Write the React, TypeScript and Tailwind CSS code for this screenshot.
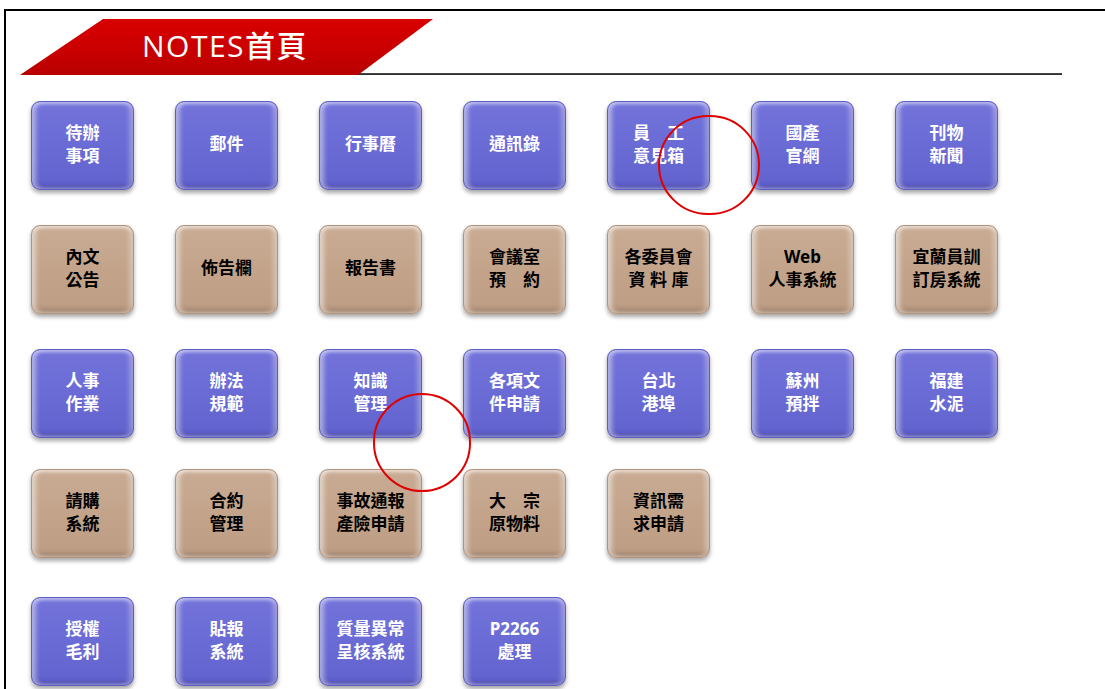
import React from "react";

type Btn = { t: string[]; c: "p" | "t" } | null;

const rows: { mt: string; items: Btn[] }[] = [
  {
    mt: "mt-[26px]",
    items: [
      { t: ["待辦", "事項"], c: "p" },
      { t: ["郵件"], c: "p" },
      { t: ["行事曆"], c: "p" },
      { t: ["通訊錄"], c: "p" },
      { t: ["員　工", "意見箱"], c: "p" },
      { t: ["國產", "官網"], c: "p" },
      { t: ["刊物", "新聞"], c: "p" },
    ],
  },
  {
    mt: "mt-[35px]",
    items: [
      { t: ["內文", "公告"], c: "t" },
      { t: ["佈告欄"], c: "t" },
      { t: ["報告書"], c: "t" },
      { t: ["會議室", "預　約"], c: "t" },
      { t: ["各委員會", "資 料 庫"], c: "t" },
      { t: ["Web", "人事系統"], c: "t" },
      { t: ["宜蘭員訓", "訂房系統"], c: "t" },
    ],
  },
  {
    mt: "mt-[35px]",
    items: [
      { t: ["人事", "作業"], c: "p" },
      { t: ["辦法", "規範"], c: "p" },
      { t: ["知識", "管理"], c: "p" },
      { t: ["各項文", "件申請"], c: "p" },
      { t: ["台北", "港埠"], c: "p" },
      { t: ["蘇州", "預拌"], c: "p" },
      { t: ["福建", "水泥"], c: "p" },
    ],
  },
  {
    mt: "mt-[31px]",
    items: [
      { t: ["請購", "系統"], c: "t" },
      { t: ["合約", "管理"], c: "t" },
      { t: ["事故通報", "產險申請"], c: "t" },
      { t: ["大　宗", "原物料"], c: "t" },
      { t: ["資訊需", "求申請"], c: "t" },
    ],
  },
  {
    mt: "mt-[39px]",
    items: [
      { t: ["授權", "毛利"], c: "p" },
      { t: ["貼報", "系統"], c: "p" },
      { t: ["質量異常", "呈核系統"], c: "p" },
      { t: ["P2266", "處理"], c: "p" },
    ],
  },
];

function Button({ b }: { b: NonNullable<Btn> }) {
  const purple = b.c === "p";
  return (
    <div
      className={
        purple
          ? "w-[103px] h-[89px] rounded-[9px] border border-[#5d5dc4] bg-gradient-to-b from-[#7373da] via-[#6b6bd6] to-[#6262ce] shadow-[inset_4px_0_4px_rgba(255,255,255,0.45),inset_-4px_0_4px_rgba(255,255,255,0.3),inset_0_-4px_4px_rgba(40,40,120,0.35),inset_0_3px_3px_rgba(255,255,255,0.25),0_3px_4px_rgba(0,0,0,0.35)] flex flex-col items-center justify-center pb-[4px] text-white"
          : "w-[103px] h-[89px] rounded-[9px] border border-[#b3937a] bg-gradient-to-b from-[#c9ab94] via-[#c3a48b] to-[#bd9d84] shadow-[inset_4px_0_4px_rgba(255,255,255,0.5),inset_-4px_0_4px_rgba(255,255,255,0.35),inset_0_-4px_4px_rgba(90,60,40,0.3),inset_0_3px_3px_rgba(255,255,255,0.3),0_3px_4px_rgba(0,0,0,0.35)] flex flex-col items-center justify-center pb-[4px] text-black"
      }
    >
      {b.t.map((l, i) => (
        <div
          key={i}
          className="text-[17px] leading-[23px] font-bold whitespace-pre [font-family:'Noto_Sans','Noto_Sans_CJK_TC',sans-serif]"
        >
          {l}
        </div>
      ))}
    </div>
  );
}

export default function App() {
  return (
    <div className="w-[1105px] h-[689px] overflow-hidden bg-white relative">
      <div className="ml-[4px] mt-[9px] h-[700px] border-l-2 border-t-2 border-black">
        <div className="pl-[14px] pt-[8px]">
          <div className="w-[413px] h-[56px] [clip-path:polygon(83px_0,413px_0,338px_56px,0_56px)] bg-gradient-to-b from-[#d80000] via-[#cc0000] to-[#b80000] flex items-center pl-[122px] pb-[2px]">
            <span className="text-white text-[30px] leading-none font-medium tracking-[1.5px] [font-family:'Open_Sans','Noto_Sans_CJK_TC',sans-serif]">
              NOTES首頁
            </span>
          </div>
          <div className="ml-[338px] -mt-[2px] w-[704px] h-[2px] bg-gradient-to-b from-[#555] to-[#222]" />
        </div>
        <div className="pl-[25px]">
          {rows.map((r, ri) => (
            <div key={ri} className={`${r.mt} flex gap-x-[41px]`}>
              {r.items.map((b, i) => (b ? <Button key={i} b={b} /> : null))}
            </div>
          ))}
        </div>
      </div>
      <div className="absolute left-[658px] top-[115px] w-[102px] h-[100px] rounded-full border-2 border-[#e00000]" />
      <div className="absolute left-[373px] top-[393px] w-[98px] h-[99px] rounded-full border-2 border-[#e00000]" />
    </div>
  );
}
